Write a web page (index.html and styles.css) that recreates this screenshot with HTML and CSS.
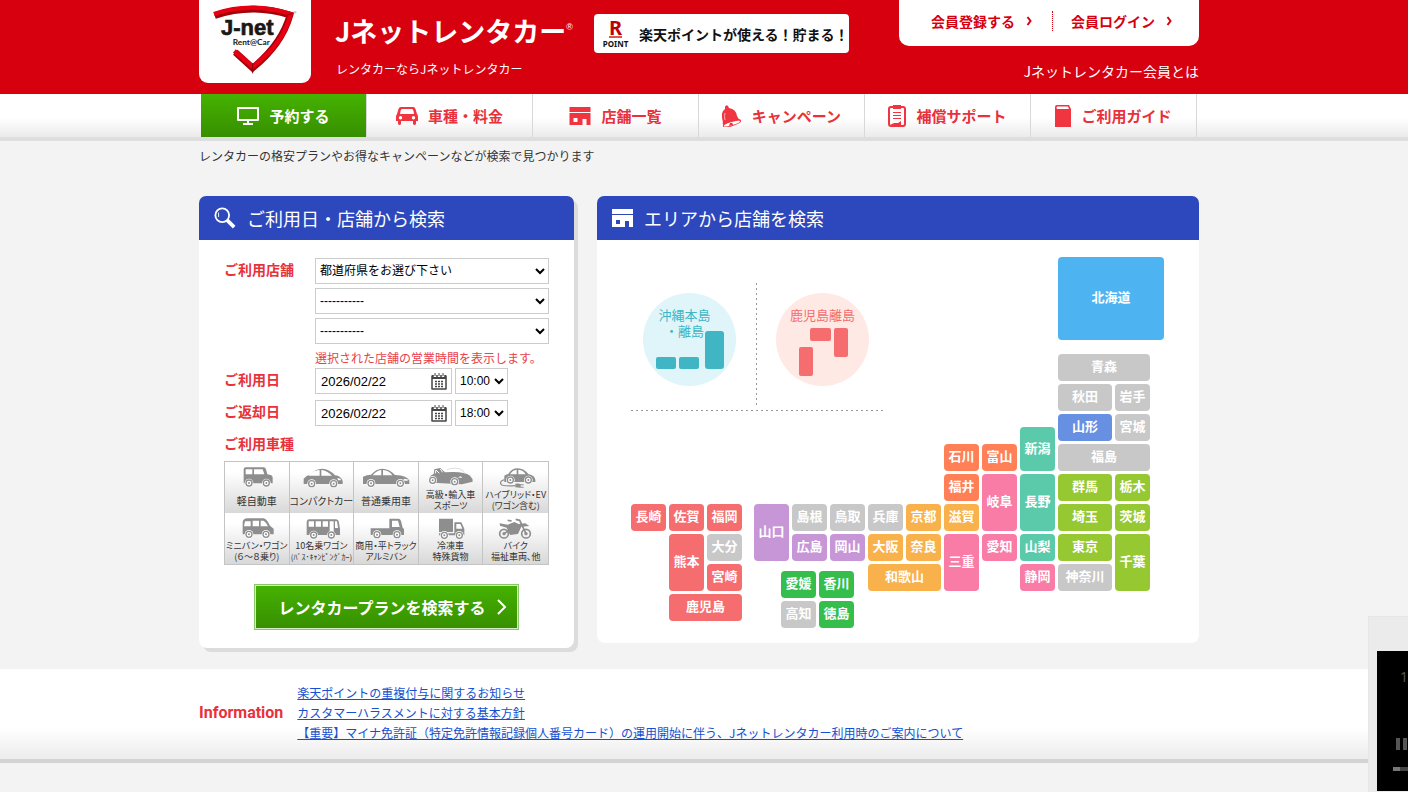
FILE: index.html
```html
<!DOCTYPE html>
<html lang="ja">
<head>
<meta charset="utf-8">
<meta name="viewport" content="width=device-width, initial-scale=1">
<title>Jネットレンタカー</title>
<link rel="stylesheet" href="styles.css">
</head>
<body>
<svg class="defs" aria-hidden="true">
  <defs>
    <g id="wheel"><circle r="13" fill="#fff"/><circle r="9" fill="#fff" stroke="#8e8e8e" stroke-width="4"/><circle r="3" fill="#8e8e8e"/></g>
    <g id="store"><path fill-rule="evenodd" d="M0 0h21v5H0zM0 6h21v12h-4v-6h-4v6H0zM4 11v4h4v-4z"/></g>
    <g id="calendar"><path d="M1 3h14v13H1z" fill="#fff" stroke="#444" stroke-width="1.500" stroke-linejoin="round"/><path d="M1 2h14v4H1z" fill="#444"/><path d="M4 0v4M8 0v4M12 0v4" stroke="#fff" stroke-width="2.500"/><path d="M4 0v3M8 0v3M12 0v3" stroke="#444" stroke-width="1"/><path d="M4 8.500h8M4 11h8M4 13.500h8" stroke="#444" stroke-width="1.300" stroke-dasharray="2 1"/></g>
  </defs>
</svg>

<header class="header">
  <div class="wrap header-inner">
    <a class="logo" href="#" aria-label="J-net Rent@Car">
      <svg viewBox="27 0 336 250" aria-hidden="true">
        <path d="M74 47Q185 9 300 45Q276 132 188 204L136 157" fill="none" stroke="#a40009" stroke-width="20"/>
        <path d="M72 42Q185 4 302 42Q280 132 188 200L133 153" fill="none" stroke="#e60012" stroke-width="13"/>
        <path d="M188 190V220M290 46l18-6" stroke="#8c0008" stroke-width="3"/>
        <text class="logo-name" x="93" y="104">J-net</text>
        <text class="logo-sub" x="128" y="134">Rent@Car</text>
        <text class="logo-mark" x="310" y="43">®</text>
      </svg>
    </a>
    <div class="brand">
      <p class="brand-name">Jネットレンタカー<sup>®</sup></p>
      <p class="brand-copy">レンタカーならJネットレンタカー</p>
    </div>
    <a class="point" href="#">
      <span class="point-mark"><b>R</b><i></i><small>POINT</small></span>
      <span>楽天ポイントが使える！貯まる！</span>
    </a>
    <div class="member">
      <div class="member-box">
        <a href="#">会員登録する<svg viewBox="0 0 6 10" aria-hidden="true"><path d="M1 1l3 4-3 4"/></svg></a>
        <a href="#">会員ログイン<svg viewBox="0 0 6 10" aria-hidden="true"><path d="M1 1l3 4-3 4"/></svg></a>
      </div>
      <a class="member-about" href="#">Jネットレンタカー会員とは</a>
    </div>
  </div>
</header>

<nav class="nav">
  <div class="wrap">
    <ul>
      <li><a class="active" href="#"><svg viewBox="0 0 22 20" width="22" height="20" aria-hidden="true"><path d="M1 2h20v12H1zM6 18h10M11 14v4" fill="none" stroke="#fff" stroke-width="2" stroke-linejoin="round"/></svg>予約する</a></li>
      <li><a href="#"><svg viewBox="0 0 22 20" width="22" height="20" aria-hidden="true"><path fill-rule="evenodd" d="M5 1h12q2 0 2.500 2L21 8q1 1 1 3v4h-2v3q-1.500 2-3 0v-3H5v3q-1.500 2-3 0v-3H0v-4q0-2 1-3l1.500-5Q3 1 5 1zM6 3Q5 3 4.500 5L4 8h14l-.5-3Q17 3 16 3zM4.500 10a1.700 1.700 0 100 3.400 1.700 1.700 0 000-3.400zm13 0a1.700 1.700 0 100 3.400 1.700 1.700 0 000-3.400z"/></svg>車種・料金</a></li>
      <li><a href="#"><svg viewBox="0 0 21 18" width="22" height="18" aria-hidden="true"><use href="#store"/></svg>店舗一覧</a></li>
      <li><a href="#"><svg viewBox="0 0 20 22" width="20" height="22" aria-hidden="true"><path d="M3 2q1-3 3-1l1 2q7 1 8 8 1 3 4 4v1L2 21q-2-2-1-4Q-2 7 3 4z"/><ellipse cx="10" cy="18.500" rx="9" ry="2" transform="rotate(-17 10 18.500)" fill="#fff" stroke="#f03540"/><path d="M8 18q3-1 3 2l-4 1z"/><path d="M3 8q-1 4 0 7" fill="none" stroke="#fff" stroke-width=".6"/></svg>キャンペーン</a></li>
      <li><a href="#"><svg viewBox="0 0 18 22" width="18" height="22" aria-hidden="true"><rect x="1" y="2" width="16" height="19" rx="2" fill="none" stroke="#f03540" stroke-width="2"/><path d="M5 0h8v4H5zM5 7h8v1H5zM5 10h8v1H5zM5 13h8v1H5zM2 20l4-2h4l3-2v5z"/></svg>補償サポート</a></li>
      <li><a href="#"><svg viewBox="0 0 16 22" width="16" height="22" aria-hidden="true"><path fill-rule="evenodd" d="M2 0h12l2 4v18H0V2q0-2 2-2zm0 1.500Q1 3 2 4h12l-1-2.500z"/></svg>ご利用ガイド</a></li>
    </ul>
  </div>
</nav>

<main>
  <div class="wrap">
    <p class="lead">レンタカーの格安プランやお得なキャンペーンなどが検索で見つかります</p>
    <div class="columns">
      <section class="panel search">
        <h2><svg viewBox="0 0 24 24" width="22" height="22" aria-hidden="true"><circle cx="9" cy="9" r="7.500" fill="none" stroke="#fff" stroke-width="2"/><path d="M14 14l8 8" stroke="#fff" stroke-width="4"/><path d="M5 6v5" stroke="#fff"/></svg>ご利用日・店舗から検索</h2>
        <form class="form">
          <div class="row">
            <label for="pref">ご利用店舗</label>
            <div class="stack">
              <select id="pref"><option>都道府県をお選び下さい</option></select>
              <select aria-label="エリア"><option>-----------</option></select>
              <select aria-label="店舗"><option>-----------</option></select>
              <p class="note">選択された店舗の営業時間を表示します。</p>
            </div>
          </div>
          <div class="row date-row">
            <label for="from">ご利用日</label>
            <div class="when">
              <span class="date"><input id="from" type="text" value="2026/02/22"><button type="button" aria-label="カレンダー"><svg viewBox="0 0 16 17" width="16" height="17" aria-hidden="true"><use href="#calendar"/></svg></button></span>
              <select aria-label="ご利用時間"><option>10:00</option></select>
            </div>
          </div>
          <div class="row date-row">
            <label for="to">ご返却日</label>
            <div class="when">
              <span class="date"><input id="to" type="text" value="2026/02/22"><button type="button" aria-label="カレンダー"><svg viewBox="0 0 16 17" width="16" height="17" aria-hidden="true"><use href="#calendar"/></svg></button></span>
              <select aria-label="ご返却時間"><option>18:00</option></select>
            </div>
          </div>
          <p class="cars-title">ご利用車種</p>
          <div class="cars">
            <button type="button"><svg viewBox="28 50 195 66" aria-hidden="true"><path d="M87 60q0-6 6-6h54q5 0 7 6l4 15 12 3q4 2 4 7v17H87z"/><path d="M93 60h20v15H93zM118 60h26l5 15h-31z" fill="#fff"/><use href="#wheel" x="103" y="101"/><use href="#wheel" x="155" y="101"/></svg><span>軽自動車</span></button>
            <button type="button"><svg viewBox="223 50 195 66" aria-hidden="true"><path d="M267 104V88q8-10 20-12 14-18 36-18 20 0 38 20 18 2 23 17v9z"/><path d="M282 79q12-16 33-17v17zM320 62q18 2 32 17h-32z" fill="#fff"/><path d="M368 86l10 2v5h-8z" fill="#fff"/><use href="#wheel" x="291" y="103"/><use href="#wheel" x="357" y="103"/></svg><span>コンパクトカー</span></button>
            <button type="button"><svg viewBox="418 50 195 66" aria-hidden="true"><path d="M445 104V82q12-6 24-6 15-18 34-18 20 0 38 19 38 2 43 17v10z"/><path d="M474 78q10-14 26-16v16zM505 62q18 1 28 16h-28z" fill="#fff"/><path d="M566 88l13 2v4h-10z" fill="#fff"/><use href="#wheel" x="469" y="102"/><use href="#wheel" x="557" y="102"/></svg><span>普通乗用車</span></button>
            <button class="tight" type="button"><svg viewBox="613 50 195 66" aria-hidden="true"><path d="M646 98q-3-18 14-24l2-14 18-4 14 13q55-5 75 10 9 8 8 18l-32 8-75-4z"/><path d="M700 62l8-4q38-7 46 16" fill="none" stroke="#ccc" stroke-width="2"/><path d="M665 72l2-10 10 10M680 59l7 10" stroke="#fff" stroke-width="3" fill="none"/><path d="M732 84l10-3 3 5z" fill="#fff"/><use href="#wheel" x="657" y="93"/><use href="#wheel" x="723" y="97"/></svg><span>高級・輸入車<br>スポーツ</span></button>
            <button class="tight" type="button"><svg viewBox="808 50 195 66" aria-hidden="true"><path d="M872 98V79q7-5 12-5 9-17 28-17t33 18q19 4 20 17v6z"/><path d="M889 75q8-13 20-14v14zM914 61q15 1 22 14h-22z" fill="#fff"/><use href="#wheel" x="890" y="92"/><use href="#wheel" x="944" y="92"/><path d="M873 91q-18 5-10 15 4 5 42 3" fill="none" stroke="#8e8e8e" stroke-width="4"/><path d="M905 103q12-2 16 2h9v3h-9v4h9v3h-11l-14-1z"/></svg><span>ハイブリッド・EV<br>(ワゴン含む)</span></button>
            <button class="tight" type="button"><svg viewBox="28 200 195 66" aria-hidden="true"><path d="M84 252v-37q2-11 14-11h48q10 1 20 22l11 9v17z"/><path d="M91 213h17v15H88zM114 211h19v17h-19zM138 211h9q8 5 13 17h-22z" fill="#fff"/><use href="#wheel" x="103" y="252"/><use href="#wheel" x="154" y="252"/></svg><span>ミニバン・ワゴン<br>(６～８乗り)</span></button>
            <button class="tight" type="button"><svg viewBox="223 200 195 66" aria-hidden="true"><path d="M276 254v-40q1-7 8-7h79q8 0 10 10l3 20v17z"/><path d="M282 213h16v16h-16zM303 213h16v16h-16zM324 213h16v16h-16zM345 213h12v33h-12zM361 213h6l3 20h-9z" fill="#fff"/><use href="#wheel" x="297" y="254"/><use href="#wheel" x="350" y="254"/></svg><span>10名乗ワゴン<br><small>(ﾊﾞｽ･ｷｬﾝﾋﾟﾝｸﾞｶｰ)</small></span></button>
            <button class="tight" type="button"><svg viewBox="418 200 195 66" aria-hidden="true"><path d="M468 234h56v-29h27q6 0 8 7l5 20 4 4v18H468z"/><path d="M532 211h18l5 19h-23z" fill="#fff"/><use href="#wheel" x="487" y="253"/><use href="#wheel" x="547" y="253"/></svg><span>商用・平トラック<br>アルミバン</span></button>
            <button class="tight" type="button"><svg viewBox="613 200 195 66" aria-hidden="true"><path d="M676 205h42v40h-42zM722 216h21l9 19v20h-76v-6h46z"/><path d="M728 221h12l6 14h-18z" fill="#fff"/><use href="#wheel" x="692" y="255"/><use href="#wheel" x="737" y="255"/></svg><span>冷凍車<br>特殊貨物</span></button>
            <button class="tight" type="button"><svg viewBox="808 200 195 66" aria-hidden="true"><g fill="none" stroke="#8e8e8e" stroke-width="5"><circle cx="871" cy="250" r="13"/><circle cx="937" cy="250" r="13"/><path d="M906 207l12 3 19 40M871 250l18-12M882 210l12 2"/></g><path d="M858 219l24 4 20-8 13 6 20-2 12 8-24 2-10 22-24 3-10-22-20-6z"/><circle cx="871" cy="250" r="5"/><circle cx="937" cy="250" r="5"/></svg><span>バイク<br>福祉車両、他</span></button>
          </div>
          <button class="submit" type="submit">レンタカープランを検索する<svg viewBox="0 0 10 18" width="10" height="18" aria-hidden="true"><path d="M1 2l7 7-7 7" fill="none" stroke="#fff" stroke-width="2"/></svg></button>
        </form>
      </section>

      <section class="panel area">
        <h2><svg viewBox="0 0 21 18" width="21" height="18" aria-hidden="true"><use href="#store" fill="#fff"/></svg>エリアから店舗を検索</h2>
        <div class="map">
          <div class="islands">
            <a class="island okinawa" href="#"><svg viewBox="0 0 93 93" aria-hidden="true"><rect x="13" y="64" width="20" height="12" rx="2"/><rect x="36" y="64" width="20" height="12" rx="2"/><rect x="62" y="38" width="19" height="38" rx="3"/></svg>沖縄本島<br>・離島</a>
            <a class="island amami" href="#"><svg viewBox="0 0 93 93" aria-hidden="true"><rect x="34" y="35" width="21" height="13" rx="2"/><rect x="58" y="35" width="14" height="29" rx="2"/><rect x="23" y="54" width="14" height="29" rx="2"/></svg>鹿児島離島</a>
          </div>
          <a class="tile hokkaido" href="#">北海道</a>
          <a class="tile none aomori" href="#">青森</a>
          <a class="tile none akita" href="#">秋田</a>
          <a class="tile none iwate" href="#">岩手</a>
          <a class="tile tohoku yamagata" href="#">山形</a>
          <a class="tile none miyagi" href="#">宮城</a>
          <a class="tile none fukushima" href="#">福島</a>
          <a class="tile koshin niigata" href="#">新潟</a>
          <a class="tile hokuriku ishikawa" href="#">石川</a>
          <a class="tile hokuriku toyama" href="#">富山</a>
          <a class="tile hokuriku fukui" href="#">福井</a>
          <a class="tile tokai gifu" href="#">岐阜</a>
          <a class="tile koshin nagano" href="#">長野</a>
          <a class="tile kanto gunma" href="#">群馬</a>
          <a class="tile kanto tochigi" href="#">栃木</a>
          <a class="tile kanto saitama" href="#">埼玉</a>
          <a class="tile kanto ibaraki" href="#">茨城</a>
          <a class="tile kanto tokyo" href="#">東京</a>
          <a class="tile kanto chiba" href="#">千葉</a>
          <a class="tile none kanagawa" href="#">神奈川</a>
          <a class="tile koshin yamanashi" href="#">山梨</a>
          <a class="tile tokai shizuoka" href="#">静岡</a>
          <a class="tile tokai aichi" href="#">愛知</a>
          <a class="tile tokai mie" href="#">三重</a>
          <a class="tile kansai shiga" href="#">滋賀</a>
          <a class="tile kansai kyoto" href="#">京都</a>
          <a class="tile none hyogo" href="#">兵庫</a>
          <a class="tile kansai osaka" href="#">大阪</a>
          <a class="tile kansai nara" href="#">奈良</a>
          <a class="tile kansai wakayama" href="#">和歌山</a>
          <a class="tile none tottori" href="#">鳥取</a>
          <a class="tile none shimane" href="#">島根</a>
          <a class="tile chugoku okayama" href="#">岡山</a>
          <a class="tile chugoku hiroshima" href="#">広島</a>
          <a class="tile chugoku yamaguchi" href="#">山口</a>
          <div class="shikoku">
            <a class="tile green" href="#">愛媛</a>
            <a class="tile green" href="#">香川</a>
            <a class="tile none" href="#">高知</a>
            <a class="tile green" href="#">徳島</a>
          </div>
          <a class="tile kyushu nagasaki" href="#">長崎</a>
          <a class="tile kyushu saga" href="#">佐賀</a>
          <a class="tile kyushu fukuoka" href="#">福岡</a>
          <a class="tile kyushu kumamoto" href="#">熊本</a>
          <a class="tile none oita" href="#">大分</a>
          <a class="tile kyushu miyazaki" href="#">宮崎</a>
          <a class="tile kyushu kagoshima" href="#">鹿児島</a>
        </div>
      </section>
    </div>
  </div>

  <section class="info">
    <div class="wrap info-inner">
      <h2>Information</h2>
      <ul>
        <li><a href="#">楽天ポイントの重複付与に関するお知らせ</a></li>
        <li><a href="#">カスタマーハラスメントに対する基本方針</a></li>
        <li><a href="#">【重要】マイナ免許証（特定免許情報記録個人番号カード）の運用開始に伴う、Jネットレンタカー利用時のご案内について</a></li>
      </ul>
    </div>
  </section>
</main>

<aside class="floating">
  <div class="player">
    <span class="count">1</span>
    <button type="button" aria-label="一時停止"><svg viewBox="0 0 12 12" width="12" height="12" aria-hidden="true"><path d="M0 0h4v12H0zM7 0h4v12H7z" fill="#555"/></svg></button>
    <span class="seek"></span>
  </div>
</aside>
</body>
</html>
```

FILE: styles.css
```css
* { box-sizing: border-box; }
body {
  margin: 0;
  background: #f3f3f3;
  color: #333;
  font: 12px/20px "Noto Sans CJK JP", sans-serif;
  min-height: 100vh;
  overflow-x: hidden;
}
p, ul, h2 { margin: 0; padding: 0; }
ul { list-style: none; }
a { color: inherit; text-decoration: none; }
button, input, select { font: inherit; color: inherit; }
svg { display: block; flex: none; }
.defs { position: absolute; width: 0; height: 0; }
.wrap { max-width: 1000px; margin: 0 auto; }
.header, .nav, main { padding-right: 10px; }

.header { background: #d7000f; color: #fff; }
.header-inner { display: flex; align-items: flex-start; height: 94px; }
.logo {
  flex: none;
  width: 112px;
  background: #fff;
  border-radius: 0 0 9px 9px;
}
.logo-name { font: bold 66px "Liberation Sans", sans-serif; fill: #1d1714; stroke: #1d1714; stroke-width: 2px; }
.logo-sub { font: bold 25px Lato, sans-serif; fill: #1d1714; }
.logo-mark { font: 13px "Liberation Sans", sans-serif; fill: #555; }
.brand { flex: none; width: 283px; padding: 12px 0 0 24px; }
.brand-name { font-size: 27px; line-height: 38px; font-weight: 700; white-space: nowrap; }
.brand-name sup { font: 9px/9px "Liberation Sans", sans-serif; vertical-align: 12px; }
.brand-copy { padding: 9px 0 0 1px; }
.point {
  flex: none;
  display: flex;
  align-items: center;
  gap: 10px;
  width: 255px;
  height: 39px;
  margin-top: 14px;
  padding-left: 8px;
  border-radius: 4px;
  background: #fff;
  color: #111;
  font-size: 14px;
  font-weight: 700;
  white-space: nowrap;
}
.point-mark { display: flex; flex-direction: column; align-items: center; width: 27px; }
.point-mark b { color: #bf0000; font: bold 20px/17px "Noto Sans", sans-serif; }
.point-mark i { width: 13px; height: 2px; background: #d55; }
.point-mark small { font: bold 8px/11px "Noto Sans", sans-serif; }
.member { margin-left: auto; text-align: right; }
.member-box {
  display: flex;
  align-items: center;
  width: 300px;
  height: 46px;
  padding: 0 0 4px 32px;
  border-radius: 0 0 10px 10px;
  background: #fff;
  color: #d7000f;
  font-size: 14px;
  font-weight: 700;
}
.member-box a { display: flex; align-items: center; gap: 11px; }
.member-box a + a { margin-left: 19px; padding-left: 18px; border-left: 1px dotted #d7000f; }
.member-box svg { width: 7px; height: 10px; fill: none; stroke: #d7000f; stroke-width: 2; }
.member-about { display: block; padding-top: 15px; font-size: 14px; }

.nav {
  background: linear-gradient(#fff 55%, #ebebeb);
  border-bottom: 4px solid #dedede;
}
.nav ul { display: flex; padding: 0 2px; }
.nav li { flex: 1; border-right: 1px solid #d8d8d8; }
.nav a {
  display: flex;
  align-items: center;
  justify-content: center;
  gap: 10px;
  height: 43px;
  color: #e8313b;
  font-size: 15px;
  font-weight: 700;
}
.nav svg { fill: #f03540; }
.nav .active { background: linear-gradient(#45b200, #378f00); color: #fff; }

.lead { padding-top: 5px; }
.columns { display: flex; align-items: flex-start; justify-content: space-between; padding-top: 30px; }
.panel { background: #fff; border-radius: 8px; }
.panel h2 {
  display: flex;
  align-items: center;
  height: 44px;
  padding-left: 15px;
  gap: 11px;
  border-radius: 7px 7px 0 0;
  background: #2d48bd;
  color: #fff;
  font-size: 18px;
  font-weight: 400;
}
.search { width: 375px; box-shadow: 4px 4px 0 #dcdcdc; }
.area { width: 602px; }

.form { padding: 18px 25px; }
.row { display: grid; grid-template-columns: 91px 1fr; }
.row label, .cars-title { color: #e8313b; font-size: 14px; line-height: 22px; font-weight: 700; }
.stack { display: grid; gap: 4px; }
select, .date {
  height: 26px;
  border: 1px solid #ccc;
  border-radius: 0;
  background: #fff;
  color: #000;
}
select { padding: 0; font-family: "Liberation Sans", "Noto Sans CJK JP", sans-serif; }
.note { color: #e8414b; line-height: 20px; }
.date-row { height: 32px; }
.when { display: flex; gap: 3px; }
.when select { width: 53px; }
.date { display: flex; align-items: center; width: 137px; padding: 0 4px; }
.date input {
  flex: 1;
  min-width: 0;
  padding: 0 1px;
  border: 0;
  background: none;
  font: 13px "Liberation Sans", sans-serif;
}
.date button { padding: 0; border: 0; background: none; }
.cars {
  display: grid;
  grid-template-columns: repeat(5, minmax(0, 1fr));
  margin-top: 7px;
  border: 1px solid #c4c4c4;
}
.cars button {
  display: flex;
  flex-direction: column;
  align-items: center;
  height: 51px;
  padding: 4px 0 1px;
  border: 0;
  border-right: 1px solid #c4c4c4;
  background: linear-gradient(#fff 20%, #d8d8d8);
  font-size: 10px;
  line-height: 11px;
  font-feature-settings: "palt";
  white-space: nowrap;
}
.cars button:nth-child(5n) { border-right: 0; }
.cars .tight { font-size: 9px; }
.cars svg { width: 65px; height: 22px; fill: #8e8e8e; }
.cars span { display: block; margin: auto 0; }
.cars small { display: block; font-size: 8px; line-height: 11px; }
.submit {
  display: flex;
  align-items: center;
  justify-content: center;
  gap: 11px;
  width: 265px;
  height: 46px;
  margin: 19px auto 0;
  padding: 0 0 0 12px;
  border: 1px solid #8cc56b;
  box-shadow: inset 0 0 0 1px #d5ecc8;
  background: linear-gradient(#45b200, #378f00);
  color: #fff;
  font-size: 16px;
  font-weight: 700;
}

.map {
  display: grid;
  grid-template-columns: repeat(3, 35px) 6px repeat(8, 35px) 54px 35px 11px;
  grid-template-rows: 94px repeat(9, 27px);
  gap: 3px;
  padding: 17px 34px 22px;
}
.tile {
  display: flex;
  align-items: center;
  justify-content: center;
  padding-bottom: 3px;
  border-radius: 4px;
  color: #fff;
  font-size: 13px;
  font-weight: 700;
  white-space: nowrap;
}
.none { background: #c8c8c8; }
.tohoku { background: #6790e2; }
.koshin { background: #5bcaab; }
.hokuriku { background: #ff8057; }
.tokai { background: #f97ca7; }
.kanto { background: #96c832; }
.kansai { background: #f8b14b; }
.chugoku { background: #c696d6; }
.green { background: #35be4b; }
.kyushu { background: #f56d6e; }
.hokkaido { grid-area: 1 / 13 / 2 / 16; margin-bottom: 11px; background: #4eb4f1; }
.aomori { grid-area: 2 / 13 / 3 / 15; }
.akita { grid-area: 3 / 13; }
.iwate { grid-area: 3 / 14; }
.yamagata { grid-area: 4 / 13; }
.miyagi { grid-area: 4 / 14; }
.fukushima { grid-area: 5 / 13 / 6 / 15; }
.niigata { grid-area: 4 / 12 / 6 / 13; margin-top: 13px; }
.ishikawa { grid-area: 5 / 10; }
.toyama { grid-area: 5 / 11; }
.fukui { grid-area: 6 / 10; }
.gifu { grid-area: 6 / 11 / 8 / 12; }
.nagano { grid-area: 6 / 12 / 8 / 13; }
.gunma { grid-area: 6 / 13; }
.tochigi { grid-area: 6 / 14; }
.saitama { grid-area: 7 / 13; }
.ibaraki { grid-area: 7 / 14; }
.tokyo { grid-area: 8 / 13; }
.chiba { grid-area: 8 / 14 / 10 / 15; }
.kanagawa { grid-area: 9 / 13; }
.yamanashi { grid-area: 8 / 12; }
.shizuoka { grid-area: 9 / 12; }
.aichi { grid-area: 8 / 11; }
.mie { grid-area: 8 / 10 / 10 / 11; }
.shiga { grid-area: 7 / 10; }
.kyoto { grid-area: 7 / 9; }
.hyogo { grid-area: 7 / 8; }
.osaka { grid-area: 8 / 8; }
.nara { grid-area: 8 / 9; }
.wakayama { grid-area: 9 / 8 / 10 / 10; }
.tottori { grid-area: 7 / 7; }
.shimane { grid-area: 7 / 6; }
.okayama { grid-area: 8 / 7; }
.hiroshima { grid-area: 8 / 6; }
.yamaguchi { grid-area: 7 / 5 / 9 / 6; }
.shikoku {
  grid-area: 9 / 5 / 11 / 8;
  display: grid;
  grid-template: 27px 27px / 35px 35px;
  gap: 3px;
  justify-content: end;
  padding: 7px 11px 0 0;
}
.nagasaki { grid-area: 7 / 1; }
.saga { grid-area: 7 / 2; }
.fukuoka { grid-area: 7 / 3; }
.kumamoto { grid-area: 8 / 2 / 10 / 3; }
.oita { grid-area: 8 / 3; }
.miyazaki { grid-area: 9 / 3; }
.kagoshima { grid-area: 10 / 2 / 11 / 4; }
.islands {
  grid-area: 1 / 1 / 4 / 9;
  display: flex;
  width: 252px;
  margin-top: 26px;
  background: repeating-linear-gradient(90deg, #999 0 2px, transparent 2px 5px) bottom / 100% 1px no-repeat;
}
.island {
  position: relative;
  width: 93px;
  height: 93px;
  margin: 10px 0 0 12px;
  padding-top: 14px;
  border-radius: 50%;
  font-size: 13px;
  line-height: 16px;
  text-align: center;
}
.island svg { position: absolute; inset: 0; }
.okinawa { background: #dff5f9; color: #40b5c4; padding-right: 10px; }
.okinawa svg { fill: #40b5c4; }
.amami { margin-left: 40px; background: #ffe9e4; color: #f56d6e; }
.amami svg { fill: #f56d6e; }
.amami::before {
  content: "";
  position: absolute;
  left: -20px;
  top: -10px;
  width: 1px;
  height: 125px;
  background: repeating-linear-gradient(#999 0 2px, transparent 2px 5px);
}

.info {
  margin: 21px -10px 0 0;
  padding-right: 10px;
  background: linear-gradient(#fff 65%, #ececec);
  border-bottom: 4px solid #d3d3d3;
}
.info-inner { display: flex; align-items: center; gap: 14px; padding: 14px 0 16px; }
.info h2 { color: #e8313b; font: bold 16px/20px Roboto, sans-serif; }
.info a { color: #1550d0; text-decoration: underline; }

.floating {
  position: fixed;
  right: 0;
  bottom: 0;
  width: 40px;
  height: 176px;
  padding: 34px 0 1px 8px;
  border: 1px solid #e6e6e6;
  border-width: 1px 0 0 1px;
  background: #ebebeb;
}
.player {
  display: flex;
  flex-direction: column;
  height: 100%;
  padding: 16px 0 20px 16px;
  overflow: hidden;
  background: #000;
  color: #555;
}
.count { padding-left: 7px; font: 14px/20px "Noto Sans", sans-serif; }
.player button { margin-top: auto; padding: 0 0 0 3px; border: 0; background: none; }
.seek { height: 4px; margin-top: 17px; background: linear-gradient(90deg, #777 7px, #444 7px); }
```
